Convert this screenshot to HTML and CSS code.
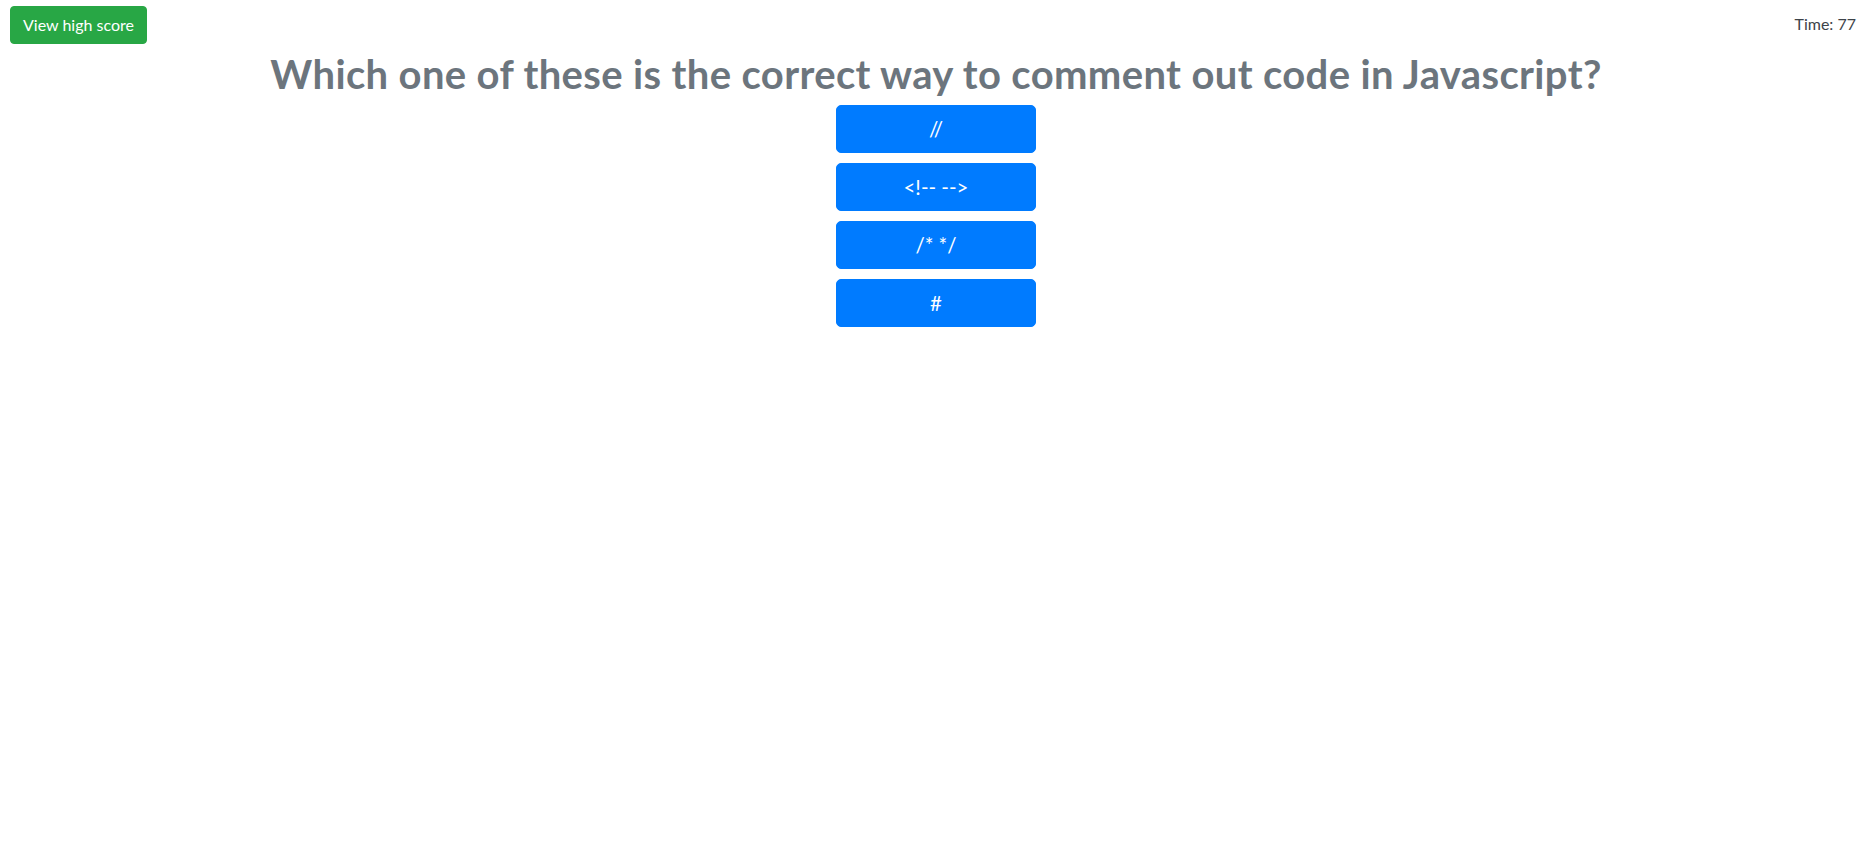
FILE: index.html
```html
<!DOCTYPE html>
<html lang="en">
<head>
<meta charset="utf-8">
<title>Code Quiz</title>
<link rel="stylesheet" href="styles.css">
</head>
<body>
<header class="topbar">
  <button class="btn btn-success">View high score</button>
  <div class="timer">Time: 77</div>
</header>
<main class="quiz">
  <h1 class="question">Which one of these is the correct way to comment out code in Javascript?</h1>
  <div class="answers">
    <button class="btn btn-primary btn-lg">//</button>
    <button class="btn btn-primary btn-lg">&lt;!-- --&gt;</button>
    <button class="btn btn-primary btn-lg">/* */</button>
    <button class="btn btn-primary btn-lg">#</button>
  </div>
</main>
</body>
</html>
```
FILE: styles.css
```css
* { box-sizing: border-box; }
body {
  margin: 0;
  font-family: Lato, "Open Sans", sans-serif;
  font-size: 16px;
  line-height: 1.5;
  color: #212529;
  background: #fff;
}
.topbar {
  display: flex;
  justify-content: space-between;
  align-items: flex-start;
  padding: 6px 9px 0 10px;
}
.timer {
  font-size: 16px;
  padding-top: 6px;
  color: #3d4349;
}
.btn {
  display: inline-block;
  font-family: inherit;
  font-weight: 400;
  text-align: center;
  border: 1px solid transparent;
  padding: 6px 12px;
  font-size: 16px;
  line-height: 1.5;
  border-radius: 4px;
  color: #fff;
  cursor: pointer;
}
.btn-success {
  background: #28a745;
  border-color: #28a745;
  width: 137px;
  padding: 6px 0;
}
.btn-primary {
  background: #007bff;
  border-color: #007bff;
}
.btn-lg {
  padding: 8px 16px;
  font-size: 20.5px;
  line-height: 30px;
  border-radius: 5px;
}
.quiz {
  display: flex;
  flex-direction: column;
  align-items: center;
  padding-left: 7px;
  margin-top: 6px;
}
.question {
  margin: 0 0 7px;
  font-size: 40px;
  line-height: 1.2;
  font-weight: 700;
  letter-spacing: 0.36px;
  color: #6c757d;
  text-align: center;
}
.answers {
  display: flex;
  flex-direction: column;
  gap: 10px;
  width: 200px;
}
.answers .btn { width: 100%; }
```
